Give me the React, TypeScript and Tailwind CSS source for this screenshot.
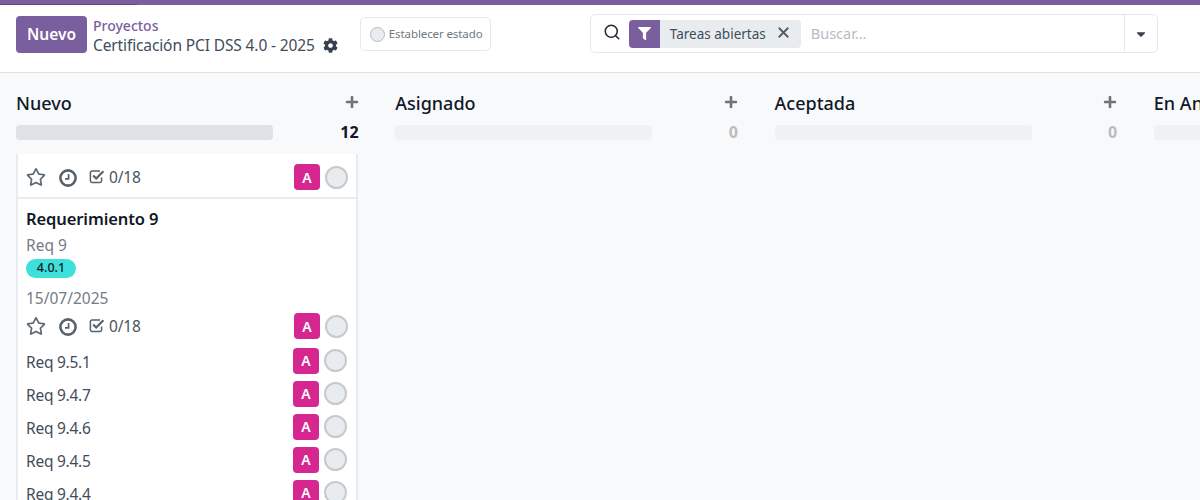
import React from "react";
import { FaCog, FaFilter, FaPlus, FaRegStar, FaCaretDown } from "react-icons/fa";
import { Search, X } from "lucide-react";

function Clock() {
  return (
    <svg width="18" height="18" viewBox="0 0 18 18" fill="none" stroke="#56616b">
      <circle cx="9" cy="9" r="7.6" strokeWidth="2.6" />
      <path d="M9.6 5v4.8H6" strokeWidth="1.7" />
    </svg>
  );
}

function Check() {
  return (
    <svg width="16" height="15" viewBox="0 0 16 15" fill="none" stroke="#56616b">
      <path d="M12.6 8.5v3.3a1.6 1.6 0 0 1-1.6 1.6H3a1.6 1.6 0 0 1-1.6-1.6V3.6A1.6 1.6 0 0 1 3 2h8" strokeWidth="1.5" />
      <path d="M4.2 6.5l3 3 7.2-7.2" strokeWidth="2.2" />
    </svg>
  );
}

function Badge() {
  return (
    <div className="flex items-center gap-[5px]">
      <div className="w-[26px] h-[26px] rounded-[4px] bg-[#d62790] text-white text-[14px] font-semibold flex items-center justify-center">A</div>
      <div className="w-[23px] h-[23px] rounded-full bg-[#e9ecef] border-2 border-[#c6cacd]" />
    </div>
  );
}

function Footer() {
  return (
    <div className="flex items-center justify-between h-[26px]">
      <div className="flex items-center">
        <FaRegStar className="w-[20px] h-[20px] text-[#5c6872]" />
        <div className="ml-[13px] mt-[2px]"><Clock /></div>
        <div className="ml-[12px] -mt-[1px]"><Check /></div>
        <span className="ml-[4px] mt-[1px] text-[15.5px] leading-none tracking-[-0.2px] text-[#4a5560]">0/18</span>
      </div>
      <Badge />
    </div>
  );
}

function Row({ t }: { t: string }) {
  return (
    <div className="flex items-center justify-between h-[33px] pl-[8px] pr-[9px]">
      <span className="mt-[4px] text-[15.5px] tracking-[-0.25px] text-[#3f4d5a]">{t}</span>
      <Badge />
    </div>
  );
}

function Head({ title, count, active }: { title: string; count: string; active?: boolean }) {
  return (
    <div className="w-[342.6px] shrink-0">
      <div className="flex items-center justify-between h-[30px]">
        <span className="text-[18px] font-medium text-[#111827]">{title}</span>
        <FaPlus className="w-[14px] h-[14px] text-[#6b757c] mb-[3px]" />
      </div>
      <div className="flex items-center justify-between mt-[2px] h-[24px]">
        <div className={`w-[257px] h-[15px] rounded-[4px] ${active ? "bg-[#dee2e6]" : "bg-[#f0f1f3]"}`} />
        <span className={`text-[16px] font-bold ${active ? "text-[#111827]" : "text-[#b8bcc0]"}`}>{count}</span>
      </div>
    </div>
  );
}

export default function App() {
  return (
    <div className="w-[1200px] h-[500px] overflow-hidden bg-[#f8f9fb] flex flex-col font-['Noto_Sans','Open_Sans',sans-serif]">
      <div className="h-[5px] bg-[#7a5f9e] shrink-0 flex items-end">
        <div className="w-[137px] h-[1px] bg-[#5f4a80]" />
      </div>
      <div className="h-[68px] shrink-0 bg-white border-b border-[#dee2e6] flex items-start pl-[16px]">
        <div className="mt-[11px] w-[71px] h-[37px] rounded-[4px] bg-[#7a5f9e] text-white text-[15.5px] font-semibold flex items-center justify-center">Nuevo</div>
        <div className="ml-[6px] mt-[10px] flex flex-col">
          <span className="text-[14px] leading-[21px] font-medium text-[#7a5f9e]">Proyectos</span>
          <div className="flex items-center h-[20px]">
            <span className="text-[15.5px] tracking-[-0.12px] text-[#3f4d5a]">Certificación PCI DSS 4.0 - 2025</span>
            <FaCog className="ml-[8px] mb-[2px] w-[15px] h-[15px] text-[#374151]" />
          </div>
        </div>
        <div className="ml-[22px] mt-[12px] w-[131px] h-[34px] rounded-[5px] border border-[#e5e7eb] flex items-center pl-[9px]">
          <span className="w-[15px] h-[15px] rounded-full bg-[#e9ecef] border border-[#b5bac0]" />
          <span className="ml-[4px] text-[11.5px] tracking-[-0.1px] text-[#70787f]">Establecer estado</span>
        </div>
        <div className="ml-[99px] mt-[9px] w-[568px] h-[39px] rounded-[5px] border border-[#e5e7eb] flex items-stretch">
          <div className="flex-1 flex items-center pl-[12px]">
            <Search className="w-[18px] h-[18px] text-[#1f2937] mb-[3px]" strokeWidth={2} />
            <div className="ml-[8px] flex h-[28px] rounded-[4px] overflow-hidden bg-[#e9ecef]">
              <div className="w-[31px] bg-[#7a5f9e] flex items-center justify-center">
                <FaFilter className="w-[13px] h-[13px] text-white" />
              </div>
              <span className="ml-[10px] text-[13.5px] leading-[28px] text-[#3f4d5a]">Tareas abiertas</span>
              <X className="ml-[9px] mr-[9px] mt-[4px] w-[17px] h-[17px] text-[#4f5b66]" strokeWidth={2.5} />
            </div>
            <span className="ml-[10px] text-[14.5px] text-[#b5bcc4]">Buscar...</span>
          </div>
          <div className="w-[33px] border-l border-[#e5e7eb] flex items-center justify-center">
            <FaCaretDown className="w-[14px] h-[14px] text-[#374151]" />
          </div>
        </div>
      </div>
      <div className="flex-1 min-h-0 pl-[16px] flex flex-col">
        <div className="flex gap-[36.7px] pt-[15px] shrink-0 h-[81px]">
          <Head title="Nuevo" count="12" active />
          <Head title="Asignado" count="0" />
          <Head title="Aceptada" count="0" />
          <Head title="En Análisis" count="0" />
        </div>
        <div className="flex-1 min-h-0 w-[342px] bg-white border-x-2 border-[#e9ecef] overflow-hidden">
          <div className="pl-[8px] pr-[8px] -mt-[17px] pb-[7px] border-b-2 border-[#e9ecef]">
            <div className="text-[15.5px] leading-[22px] text-[#747c84]">15/07/2025</div>
            <div className="mt-[5px]"><Footer /></div>
          </div>
          <div className="pl-[8px] pr-[8px] pt-[8px] pb-[5px]">
            <div className="text-[16.5px] leading-[24px] tracking-[-0.1px] font-semibold text-[#111827]">Requerimiento 9</div>
            <div className="mt-[3px] text-[15.5px] leading-[22px] text-[#747c84]">Req 9</div>
            <div className="mt-[3px] w-[50px] h-[19px] rounded-full bg-[#3de0da] text-[12.5px] font-medium text-[#111827] flex items-center justify-center">4.0.1</div>
            <div className="mt-[9px] text-[15.5px] leading-[22px] text-[#747c84]">15/07/2025</div>
            <div className="mt-[4px]"><Footer /></div>
          </div>
          <Row t="Req 9.5.1" />
          <Row t="Req 9.4.7" />
          <Row t="Req 9.4.6" />
          <Row t="Req 9.4.5" />
          <Row t="Req 9.4.4" />
        </div>
      </div>
    </div>
  );
}
